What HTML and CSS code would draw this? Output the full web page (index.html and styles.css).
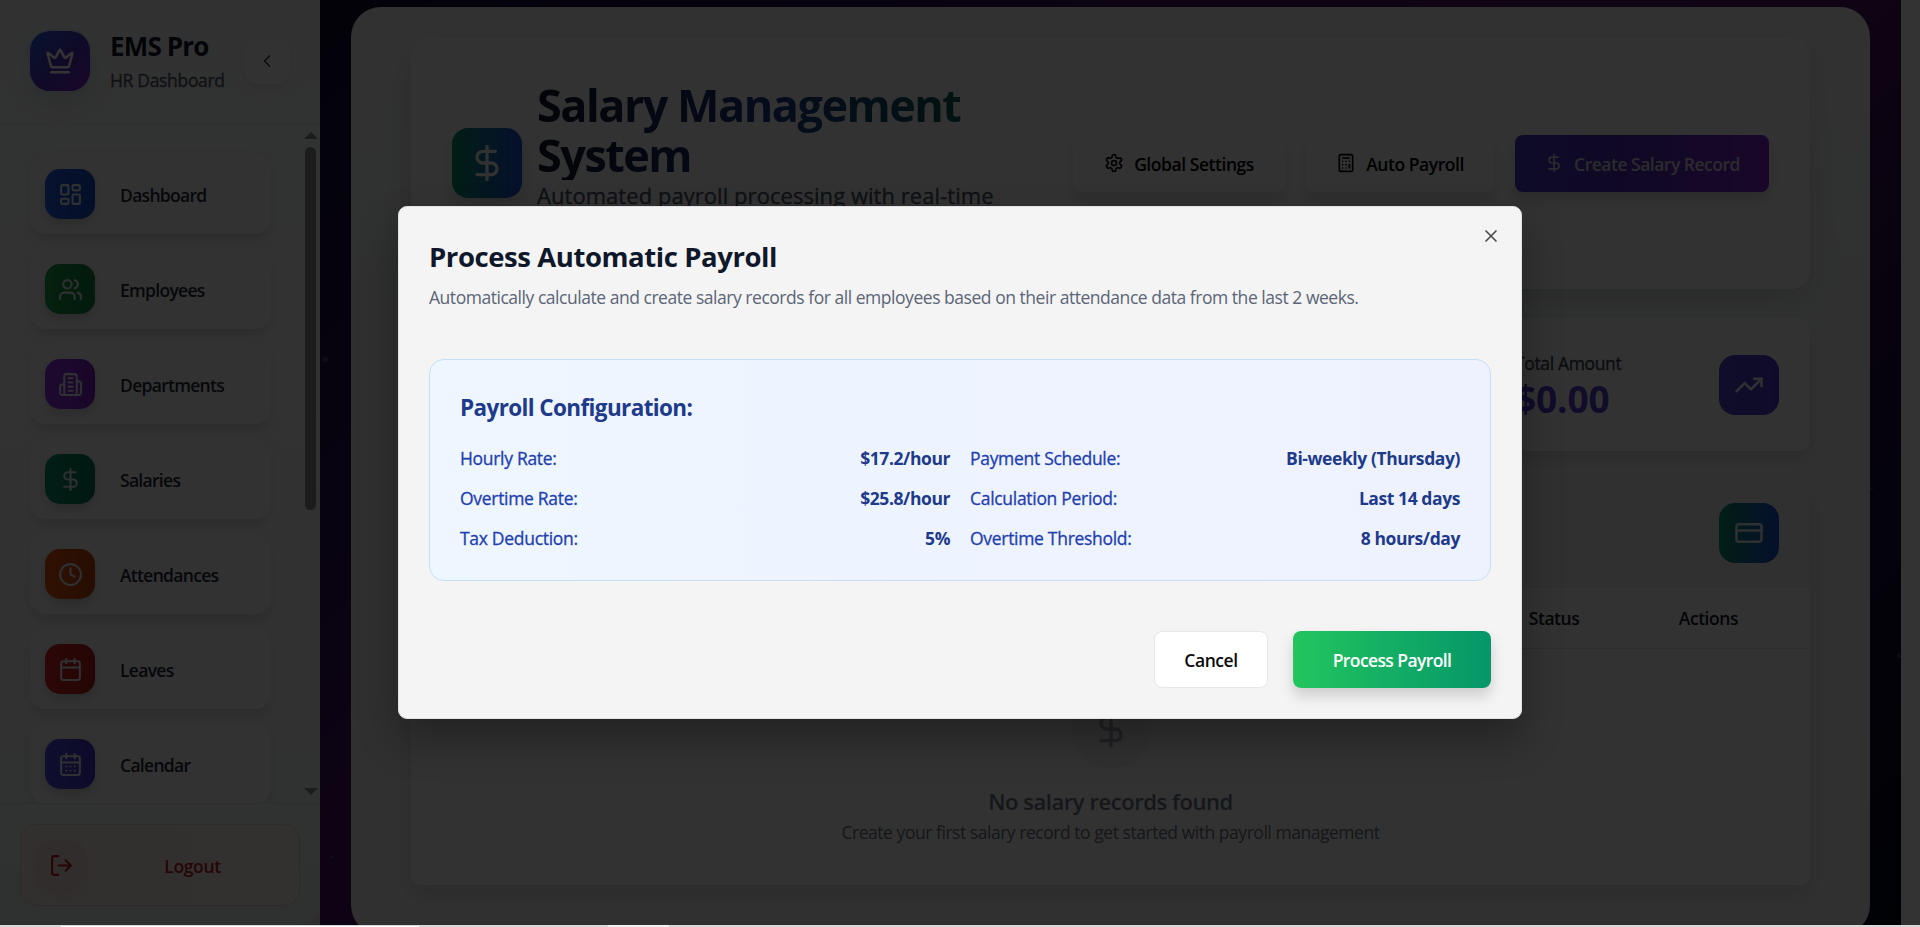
FILE: index.html
```html
<!DOCTYPE html>
<html lang="en">
<head>
<meta charset="utf-8">
<title>EMS Pro - Salary Management</title>
<link rel="stylesheet" href="styles.css">
</head>
<body>
<svg class="sprite" aria-hidden="true">
  <symbol id="crown" viewBox="0 0 24 24"><path d="M11.562 3.266a.5.5 0 0 1 .876 0L15.39 8.87a1 1 0 0 0 1.516.294L21.183 5.5a.5.5 0 0 1 .798.519l-2.834 10.246a1 1 0 0 1-.956.734H5.81a1 1 0 0 1-.957-.734L2.02 6.02a.5.5 0 0 1 .798-.519l4.276 3.664a1 1 0 0 0 1.516-.294z"/><path d="M5 21h14"/></symbol>
  <symbol id="chevron" viewBox="0 0 24 24"><path d="m15 18-6-6 6-6"/></symbol>
  <symbol id="dashboard" viewBox="0 0 24 24"><rect x="3" y="3" width="7" height="9" rx="1"/><rect x="14" y="3" width="7" height="5" rx="1"/><rect x="14" y="12" width="7" height="9" rx="1"/><rect x="3" y="16" width="7" height="5" rx="1"/></symbol>
  <symbol id="users" viewBox="0 0 24 24"><path d="M16 21v-2a4 4 0 0 0-4-4H6a4 4 0 0 0-4 4v2"/><circle cx="9" cy="7" r="4"/><path d="M22 21v-2a4 4 0 0 0-3-3.87"/><path d="M16 3.13a4 4 0 0 1 0 7.75"/></symbol>
  <symbol id="building" viewBox="0 0 24 24"><path d="M6 22V4a2 2 0 0 1 2-2h8a2 2 0 0 1 2 2v18Z"/><path d="M6 12H4a2 2 0 0 0-2 2v6a2 2 0 0 0 2 2h2"/><path d="M18 9h2a2 2 0 0 1 2 2v9a2 2 0 0 1-2 2h-2"/><path d="M10 6h4M10 10h4M10 14h4M10 18h4"/></symbol>
  <symbol id="dollar" viewBox="0 0 24 24"><path d="M12 2v20"/><path d="M17 5H9.5a3.5 3.5 0 0 0 0 7h5a3.5 3.5 0 0 1 0 7H6"/></symbol>
  <symbol id="clock" viewBox="0 0 24 24"><circle cx="12" cy="12" r="10"/><path d="M12 6v6l4 2"/></symbol>
  <symbol id="calendar" viewBox="0 0 24 24"><path d="M8 2v4M16 2v4M3 10h18"/><rect x="3" y="4" width="18" height="18" rx="2"/></symbol>
  <symbol id="calendar-days" viewBox="0 0 24 24"><path d="M8 2v4M16 2v4M3 10h18"/><rect x="3" y="4" width="18" height="18" rx="2"/><path d="M8 14h.01M12 14h.01M16 14h.01M8 18h.01M12 18h.01M16 18h.01"/></symbol>
  <symbol id="logout" viewBox="0 0 24 24"><path d="M9 21H5a2 2 0 0 1-2-2V5a2 2 0 0 1 2-2h4"/><path d="m16 17 5-5-5-5M21 12H9"/></symbol>
  <symbol id="settings" viewBox="0 0 24 24"><path d="M12.22 2h-.44a2 2 0 0 0-2 2v.18a2 2 0 0 1-1 1.73l-.43.25a2 2 0 0 1-2 0l-.15-.08a2 2 0 0 0-2.73.73l-.22.38a2 2 0 0 0 .73 2.73l.15.1a2 2 0 0 1 1 1.72v.51a2 2 0 0 1-1 1.74l-.15.09a2 2 0 0 0-.73 2.73l.22.38a2 2 0 0 0 2.73.73l.15-.08a2 2 0 0 1 2 0l.43.25a2 2 0 0 1 1 1.73V20a2 2 0 0 0 2 2h.44a2 2 0 0 0 2-2v-.18a2 2 0 0 1 1-1.73l.43-.25a2 2 0 0 1 2 0l.15.08a2 2 0 0 0 2.73-.73l.22-.39a2 2 0 0 0-.73-2.73l-.15-.08a2 2 0 0 1-1-1.74v-.5a2 2 0 0 1 1-1.74l.15-.09a2 2 0 0 0 .73-2.73l-.22-.38a2 2 0 0 0-2.73-.73l-.15.08a2 2 0 0 1-2 0l-.43-.25a2 2 0 0 1-1-1.73V4a2 2 0 0 0-2-2z"/><circle cx="12" cy="12" r="3"/></symbol>
  <symbol id="calculator" viewBox="0 0 24 24"><rect x="4" y="2" width="16" height="20" rx="2"/><path d="M8 6h8M16 14v4M16 10h.01M12 10h.01M8 10h.01M12 14h.01M8 14h.01M12 18h.01M8 18h.01"/></symbol>
  <symbol id="trending" viewBox="0 0 24 24"><path d="m22 7-8.5 8.5-5-5L2 17"/><path d="M16 7h6v6"/></symbol>
  <symbol id="card" viewBox="0 0 24 24"><rect x="2" y="5" width="20" height="14" rx="2"/><path d="M2 10h20"/></symbol>
  <symbol id="close" viewBox="0 0 24 24"><path d="M18 6 6 18M6 6l12 12"/></symbol>
</svg>

<div class="app">
  <div class="side-back">
  <aside class="sidebar">
    <header class="brand">
      <div class="brand-logo"><svg class="icon i30"><use href="#crown"/></svg></div>
      <div class="brand-text">
        <div class="brand-name">EMS Pro</div>
        <div class="brand-sub">HR Dashboard</div>
      </div>
      <button class="toggle"><svg class="icon i20"><use href="#chevron"/></svg></button>
    </header>
    <div class="nav-wrap">
      <nav class="nav">
        <a class="nav-item"><span class="nav-icon blue"><svg class="icon i25"><use href="#dashboard"/></svg></span><span class="nav-label">Dashboard</span></a>
        <a class="nav-item"><span class="nav-icon green"><svg class="icon i25"><use href="#users"/></svg></span><span class="nav-label">Employees</span></a>
        <a class="nav-item"><span class="nav-icon purple"><svg class="icon i25"><use href="#building"/></svg></span><span class="nav-label">Departments</span></a>
        <a class="nav-item"><span class="nav-icon emerald"><svg class="icon i25"><use href="#dollar"/></svg></span><span class="nav-label">Salaries</span></a>
        <a class="nav-item"><span class="nav-icon orange"><svg class="icon i25"><use href="#clock"/></svg></span><span class="nav-label">Attendances</span></a>
        <a class="nav-item"><span class="nav-icon red"><svg class="icon i25"><use href="#calendar"/></svg></span><span class="nav-label">Leaves</span></a>
        <a class="nav-item"><span class="nav-icon indigo"><svg class="icon i25"><use href="#calendar-days"/></svg></span><span class="nav-label">Calendar</span></a>
      </nav>
      <div class="scrollbar"><i class="arrow-up"></i><i class="thumb"></i><i class="arrow-down"></i></div>
    </div>
    <footer class="side-foot">
      <button class="logout"><span class="logout-icon"><svg class="icon i25"><use href="#logout"/></svg></span><span class="logout-text">Logout</span></button>
    </footer>
  </aside>
  </div>

  <main class="main">
    <i class="star s1"></i><i class="star s2"></i>
    <section class="panel">
      <header class="hero">
        <div class="hero-icon"><svg class="icon i40"><use href="#dollar"/></svg></div>
        <div class="hero-text">
          <h1 class="hero-title">Salary Management System</h1>
          <p class="hero-sub">Automated payroll processing with real-time</p>
        </div>
        <div class="hero-actions">
          <button class="btn-soft settings"><svg class="icon i20"><use href="#settings"/></svg><span>Global Settings</span></button>
          <button class="btn-soft auto"><svg class="icon i20"><use href="#calculator"/></svg><span>Auto Payroll</span></button>
          <button class="btn-create"><svg class="icon i20"><use href="#dollar"/></svg><span>Create Salary Record</span></button>
        </div>
      </header>
      <div class="stats">
        <div class="stat">
          <div class="stat-text"><div class="stat-label">Total Amount</div><div class="stat-value">$0.00</div></div>
          <div class="stat-icon violet"><svg class="icon i30"><use href="#trending"/></svg></div>
        </div>
      </div>
      <section class="records">
        <div class="records-head"><div class="stat-icon teal"><svg class="icon i30"><use href="#card"/></svg></div></div>
        <div class="thead"><span class="th-status">Status</span><span>Actions</span></div>
        <div class="empty">
          <div class="empty-icon"><svg class="icon i40"><use href="#dollar"/></svg></div>
          <div class="empty-title">No salary records found</div>
          <div class="empty-sub">Create your first salary record to get started with payroll management</div>
        </div>
      </section>
    </section>
    <i class="star s3"></i><i class="star s4"></i>
  </main>
  <div class="page-scroll"></div>

  <div class="overlay">
    <div class="modal" role="dialog">
      <svg class="icon i20 modal-close"><use href="#close"/></svg>
      <h2 class="modal-title">Process Automatic Payroll</h2>
      <p class="modal-desc">Automatically calculate and create salary records for all employees based on their attendance data from the last 2 weeks.</p>
      <section class="config">
        <h3 class="config-title">Payroll Configuration:</h3>
        <dl class="config-grid">
          <div class="row"><dt>Hourly Rate:</dt><dd>$17.2/hour</dd></div>
          <div class="row"><dt>Payment Schedule:</dt><dd>Bi-weekly (Thursday)</dd></div>
          <div class="row"><dt>Overtime Rate:</dt><dd>$25.8/hour</dd></div>
          <div class="row"><dt>Calculation Period:</dt><dd>Last 14 days</dd></div>
          <div class="row"><dt>Tax Deduction:</dt><dd>5%</dd></div>
          <div class="row"><dt>Overtime Threshold:</dt><dd>8 hours/day</dd></div>
        </dl>
      </section>
      <footer class="modal-foot">
        <button class="btn-cancel">Cancel</button>
        <button class="btn-process">Process Payroll</button>
      </footer>
    </div>
  </div>
</div>
<div class="bottom-edge"><i class="edge-tab"></i><i class="edge-light"></i></div>
</body>
</html>
```
FILE: styles.css
```css
* { box-sizing: border-box; }
body {
  margin: 0; height: 927px; overflow: hidden; background: #fff;
  font-family: "Segoe UI", "Open Sans", "Noto Sans", sans-serif;
  font-size: 17.5px; line-height: 1.5; letter-spacing: -.35px;
}
button { font: inherit; letter-spacing: inherit; border: 0; padding: 0; margin: 0; }
h1, h2, h3, p, dl, dd { margin: 0; }
.sprite { display: none; }
.icon { display: block; flex: none; fill: none; stroke: currentColor; stroke-width: 2; stroke-linecap: round; stroke-linejoin: round; }
.i20 { width: 20px; height: 20px; }
.i25 { width: 25px; height: 25px; }
.i30 { width: 30px; height: 30px; }
.i40 { width: 40px; height: 40px; }

.app { position: relative; display: flex; height: 925px; overflow: hidden; background: #14092e; }
.bottom-edge { height: 2px; display: flex; background: #d9d9d9; }
.edge-tab { width: 358px; height: 1px; margin: 1px 189px 0 61px; background: #fff; }
.edge-light { width: 61px; background: #f2f0f2; }

/* Sidebar */
.side-back { flex: none; width: 320px; background: #ece6ec; }
.sidebar {
  width: 320px; height: 925px; display: flex; flex-direction: column; border-radius: 0 0 22px 0; overflow: hidden;
  background: linear-gradient(180deg, #f3f6f8, #f8f8f8 35%, #f2f3f6 80%, #eaf2f2);
}
.brand { height: 124px; display: flex; align-items: center; padding: 0 30px 2px 30px; border-bottom: 1px solid #e8eaee; }
.brand-logo {
  width: 60px; height: 60px; border-radius: 20px; display: flex; align-items: center; justify-content: center;
  color: #fff; background: linear-gradient(135deg, #2563eb, #4f34c0 50%, #7e22ce);
  box-shadow: 0 0 0 2px #dde6f3, 0 10px 25px rgba(30, 60, 90, .12);
}
.brand-text { width: 134px; margin-left: 20px; padding-top: 2px; white-space: nowrap; }
.brand-name { font-size: 26px; font-weight: 700; line-height: 33px; letter-spacing: -.85px; color: #0f172a; }
.brand-sub { line-height: 27px; margin-top: 4px; letter-spacing: -.32px; color: #4b5563; -webkit-text-stroke: .3px currentColor; }
.toggle {
  width: 46px; height: 46px; border-radius: 15px; background: #fafafa; color: #374151;
  display: flex; align-items: center; justify-content: center; box-shadow: 0 4px 12px rgba(0, 0, 0, .08);
}
.nav-wrap { flex: 1; min-height: 0; display: flex; overflow: hidden; }
.nav { flex: 1; padding: 30px 29px 0 30px; display: flex; flex-direction: column; gap: 15px; }
.nav-item {
  flex: none; height: 80px; width: 241px; border-radius: 16px; padding-left: 15px; display: flex; align-items: center; gap: 25px;
  font-weight: 600; letter-spacing: -.7px; color: #1f2937; background: rgba(249, 249, 250, .75);
  box-shadow: 0 8px 14px -4px rgba(0, 0, 0, .13), 0 2px 12px rgba(0, 0, 0, .03);
}
.nav-label { padding-top: 2px; }
.nav-icon {
  width: 50px; height: 50px; border-radius: 15px; display: flex; align-items: center; justify-content: center;
  color: #e8edf5; box-shadow: 0 5px 10px rgba(0, 0, 0, .14);
}
.blue { background: linear-gradient(90deg, #2563eb, #1448c4); }
.green { background: linear-gradient(90deg, #16a34a, #12803c); }
.purple { background: linear-gradient(90deg, #9333ea, #7a1fc9); }
.emerald { background: linear-gradient(90deg, #059669, #047857); }
.orange { background: linear-gradient(90deg, #ea580c, #c2410c); }
.red { background: linear-gradient(90deg, #dc2626, #b91c1c); }
.indigo { background: linear-gradient(90deg, #4f46e5, #4338ca); }
.scrollbar { width: 19px; flex: none; display: flex; flex-direction: column; align-items: center; padding: 8px 0; }
.arrow-up, .arrow-down { border: solid transparent; border-width: 0 7px; }
.arrow-up { border-bottom: 7px solid #8b8b8b; }
.arrow-down { border-top: 7px solid #8b8b8b; margin-top: auto; }
.thumb { width: 11px; height: 363px; margin-top: 8px; border-radius: 6px; background: #8b8b8b; }
.side-foot { height: 122px; padding: 20px; border-top: 1px solid #dfe1e4; }
.logout {
  width: 280px; height: 82px; border-radius: 16px; display: flex; align-items: center; padding: 0 0 0 15px;
  border: 1px solid #eccaca; background: linear-gradient(90deg, #f9efec, #faf3ea); color: #b91c1c; font-weight: 600;
}
.logout-icon { width: 50px; height: 50px; border-radius: 15px; display: flex; align-items: center; justify-content: center; background: #f8e0e0; box-shadow: 0 6px 12px rgba(120, 0, 0, .08); }
.logout-text { flex: 1; text-align: center; padding-top: 2px; }

/* Content */
.main {
  position: relative; width: 1581px; flex: none; padding: 7px 31px 0;
  background: linear-gradient(135deg, #0f0a2e, #22104e 18%, #451264 34%, #511566 60%, #190b3e 80%, #060b16);
}
.page-scroll { flex: 1; background: #fcfcfc; }
.star { position: absolute; width: 5px; height: 5px; border-radius: 50%; background: rgba(255, 255, 255, .2); }
.s1 { left: 3px; top: 357px; }
.s2 { left: 10px; top: 855px; width: 3px; height: 3px; }
.s3 { left: 1550px; top: 487px; width: 3px; height: 3px; }
.s4 { left: 1577px; top: 653px; }
.panel {
  height: 928px; width: 1519px; border-radius: 30px; padding: 30px 60px 0;
  background: linear-gradient(180deg, #f5f6f5, #eef1f3 30%, #f0f0f4 80%);
}
.hero {
  height: 252px; border-radius: 20px; padding: 0 41px; display: flex; background: linear-gradient(90deg, #fafafa, #f7faf8 45%, #fafafa 75%);
  box-shadow: 0 12px 30px rgba(0, 0, 0, .11);
}
.hero-icon {
  width: 70px; height: 70px; margin-top: 91px; border-radius: 16px; display: flex; align-items: center; justify-content: center;
  color: #f3f4f6; background: linear-gradient(90deg, #059669, #1d4ed8); box-shadow: 0 8px 16px rgba(0, 0, 0, .14);
}
.hero-text { width: 475px; margin: 39px 0 0 15px; }
.hero-title {
  font-size: 45px; line-height: 50px; letter-spacing: -1.5px; font-weight: 700; color: transparent; padding-top: 4px;
  background: linear-gradient(90deg, #0f172a, #1e3a8a 50%, #065f46); background-clip: text; -webkit-background-clip: text;
}
.hero-sub { font-size: 22px; line-height: 31px; letter-spacing: .05px; color: #4b5563; white-space: nowrap; -webkit-text-stroke: .3px currentColor; }
.hero-actions { display: flex; gap: 21px; margin: 98px 0 0 auto; color: #000; font-weight: 600; white-space: nowrap; }
.hero-actions button { height: 57px; border-radius: 8px; display: flex; align-items: center; justify-content: center; gap: 10px; font-weight: 600; letter-spacing: -.45px; }
.hero-actions span { padding-top: 2px; }
.hero-actions .icon { margin-bottom: 2px; }
.btn-soft { background: #fafafa; box-shadow: 0 8px 14px rgba(0, 0, 0, .11); color: #000; }
.settings { width: 212px; }
.auto { width: 188px; }
.hero-actions .btn-create { width: 254px; gap: 10px; letter-spacing: -.5px; color: #d4d6de; background: linear-gradient(90deg, #4338ca, #4f2bb8 45%, #7e22ce); box-shadow: 0 8px 16px rgba(0, 0, 0, .14); }
.stats { margin-top: 29px; display: flex; justify-content: flex-end; }
.stat {
  width: 326px; height: 133px; border-radius: 10px; padding: 0 31px; display: flex; align-items: center; justify-content: space-between;
  background: #f9faf8; box-shadow: 0 8px 18px rgba(0, 0, 0, .1);
}
.stat-text { padding-top: 1px; }
.stat-label { line-height: 27px; color: #374151; -webkit-text-stroke: .3px currentColor; }
.stat-value { font-size: 37px; line-height: 44px; font-weight: 700; letter-spacing: -.1px; color: #4f3cd0; }
.stat-icon { width: 60px; height: 60px; border-radius: 16px; display: flex; align-items: center; justify-content: center; color: #eceef5; }
.violet { background: linear-gradient(90deg, #4a44c8, #4f35d0); }
.teal { background: linear-gradient(90deg, #059669, #1d4ed8); }
.records { height: 404px; margin-top: 30px; border-radius: 10px; overflow: hidden; background: #f9faf8; box-shadow: 0 10px 22px rgba(0, 0, 0, .1); }
.records-head { height: 107px; padding: 0 31px 3px; display: flex; align-items: center; justify-content: flex-end; background: #eff0f3; border-bottom: 1px solid #e2e5e6; }
.thead { height: 61px; display: flex; align-items: center; justify-content: flex-end; padding-right: 72px; border-bottom: 1px solid #dfe2e4; font-weight: 600; letter-spacing: -.45px; color: #111827; }
.th-status { width: 150px; }
.empty { display: flex; flex-direction: column; align-items: center; padding-top: 40px; }
.empty-icon { width: 80px; height: 80px; border-radius: 50%; background: #f3eeee; color: #9ca3af; display: flex; align-items: center; justify-content: center; }
.empty-title { margin-top: 15px; font-size: 22px; line-height: 34px; font-weight: 600; letter-spacing: -.45px; color: #6b7280; }
.empty-sub { margin-top: 1px; line-height: 27px; letter-spacing: -.46px; color: #6b7280; }

/* Dialog */
.overlay { position: absolute; inset: 0; display: flex; align-items: center; justify-content: center; background: rgba(0, 0, 0, .8); }
.modal {
  position: relative; width: 1124px; height: 513px; border-radius: 9px; background: #f4f4f4;
  border: 1px solid #e0e2e4; padding: 29px 30px; box-shadow: 0 20px 40px rgba(0, 0, 0, .3);
}
.modal-close { position: absolute; right: 20px; top: 19px; color: #4a4a4a; }
.modal-title { font-size: 27.5px; line-height: 42px; font-weight: 700; letter-spacing: -.43px; color: #0f172a; }
.modal-desc { margin-top: 6px; line-height: 27px; letter-spacing: -.465px; color: #5b6577; white-space: nowrap; }
.config { height: 222px; margin-top: 48px; border: 1px solid #c5dffb; border-radius: 15px; padding: 31px 30px 29px; background: linear-gradient(90deg, #eef6ff, #eef2ff); }
.config-title { font-size: 22.5px; line-height: 34px; font-weight: 700; letter-spacing: -.62px; color: #1e3a8a; }
.config-grid { display: grid; grid-template-columns: 1fr 1fr; column-gap: 20px; row-gap: 13px; margin-top: 20px; line-height: 27px; }
.row { display: flex; justify-content: space-between; color: #1e40af; white-space: nowrap; }
.row dt { letter-spacing: -.3px; -webkit-text-stroke: .3px currentColor; }
.row dd { font-weight: 700; letter-spacing: -.42px; color: #1e3a8a; }
.modal-foot { display: flex; justify-content: flex-end; gap: 25px; margin-top: 50px; }
.modal-foot button { height: 57px; border-radius: 8px; font-weight: 600; letter-spacing: -.45px; padding-top: 2px; }
.btn-cancel { width: 114px; background: #fff; border: 1px solid #e5e7eb; color: #0a0a0a; }
.modal-foot .btn-process { width: 198px; color: #fff; letter-spacing: -.6px; background: linear-gradient(90deg, #22c55e, #059669); box-shadow: 0 8px 14px rgba(0, 0, 0, .16); }
```
